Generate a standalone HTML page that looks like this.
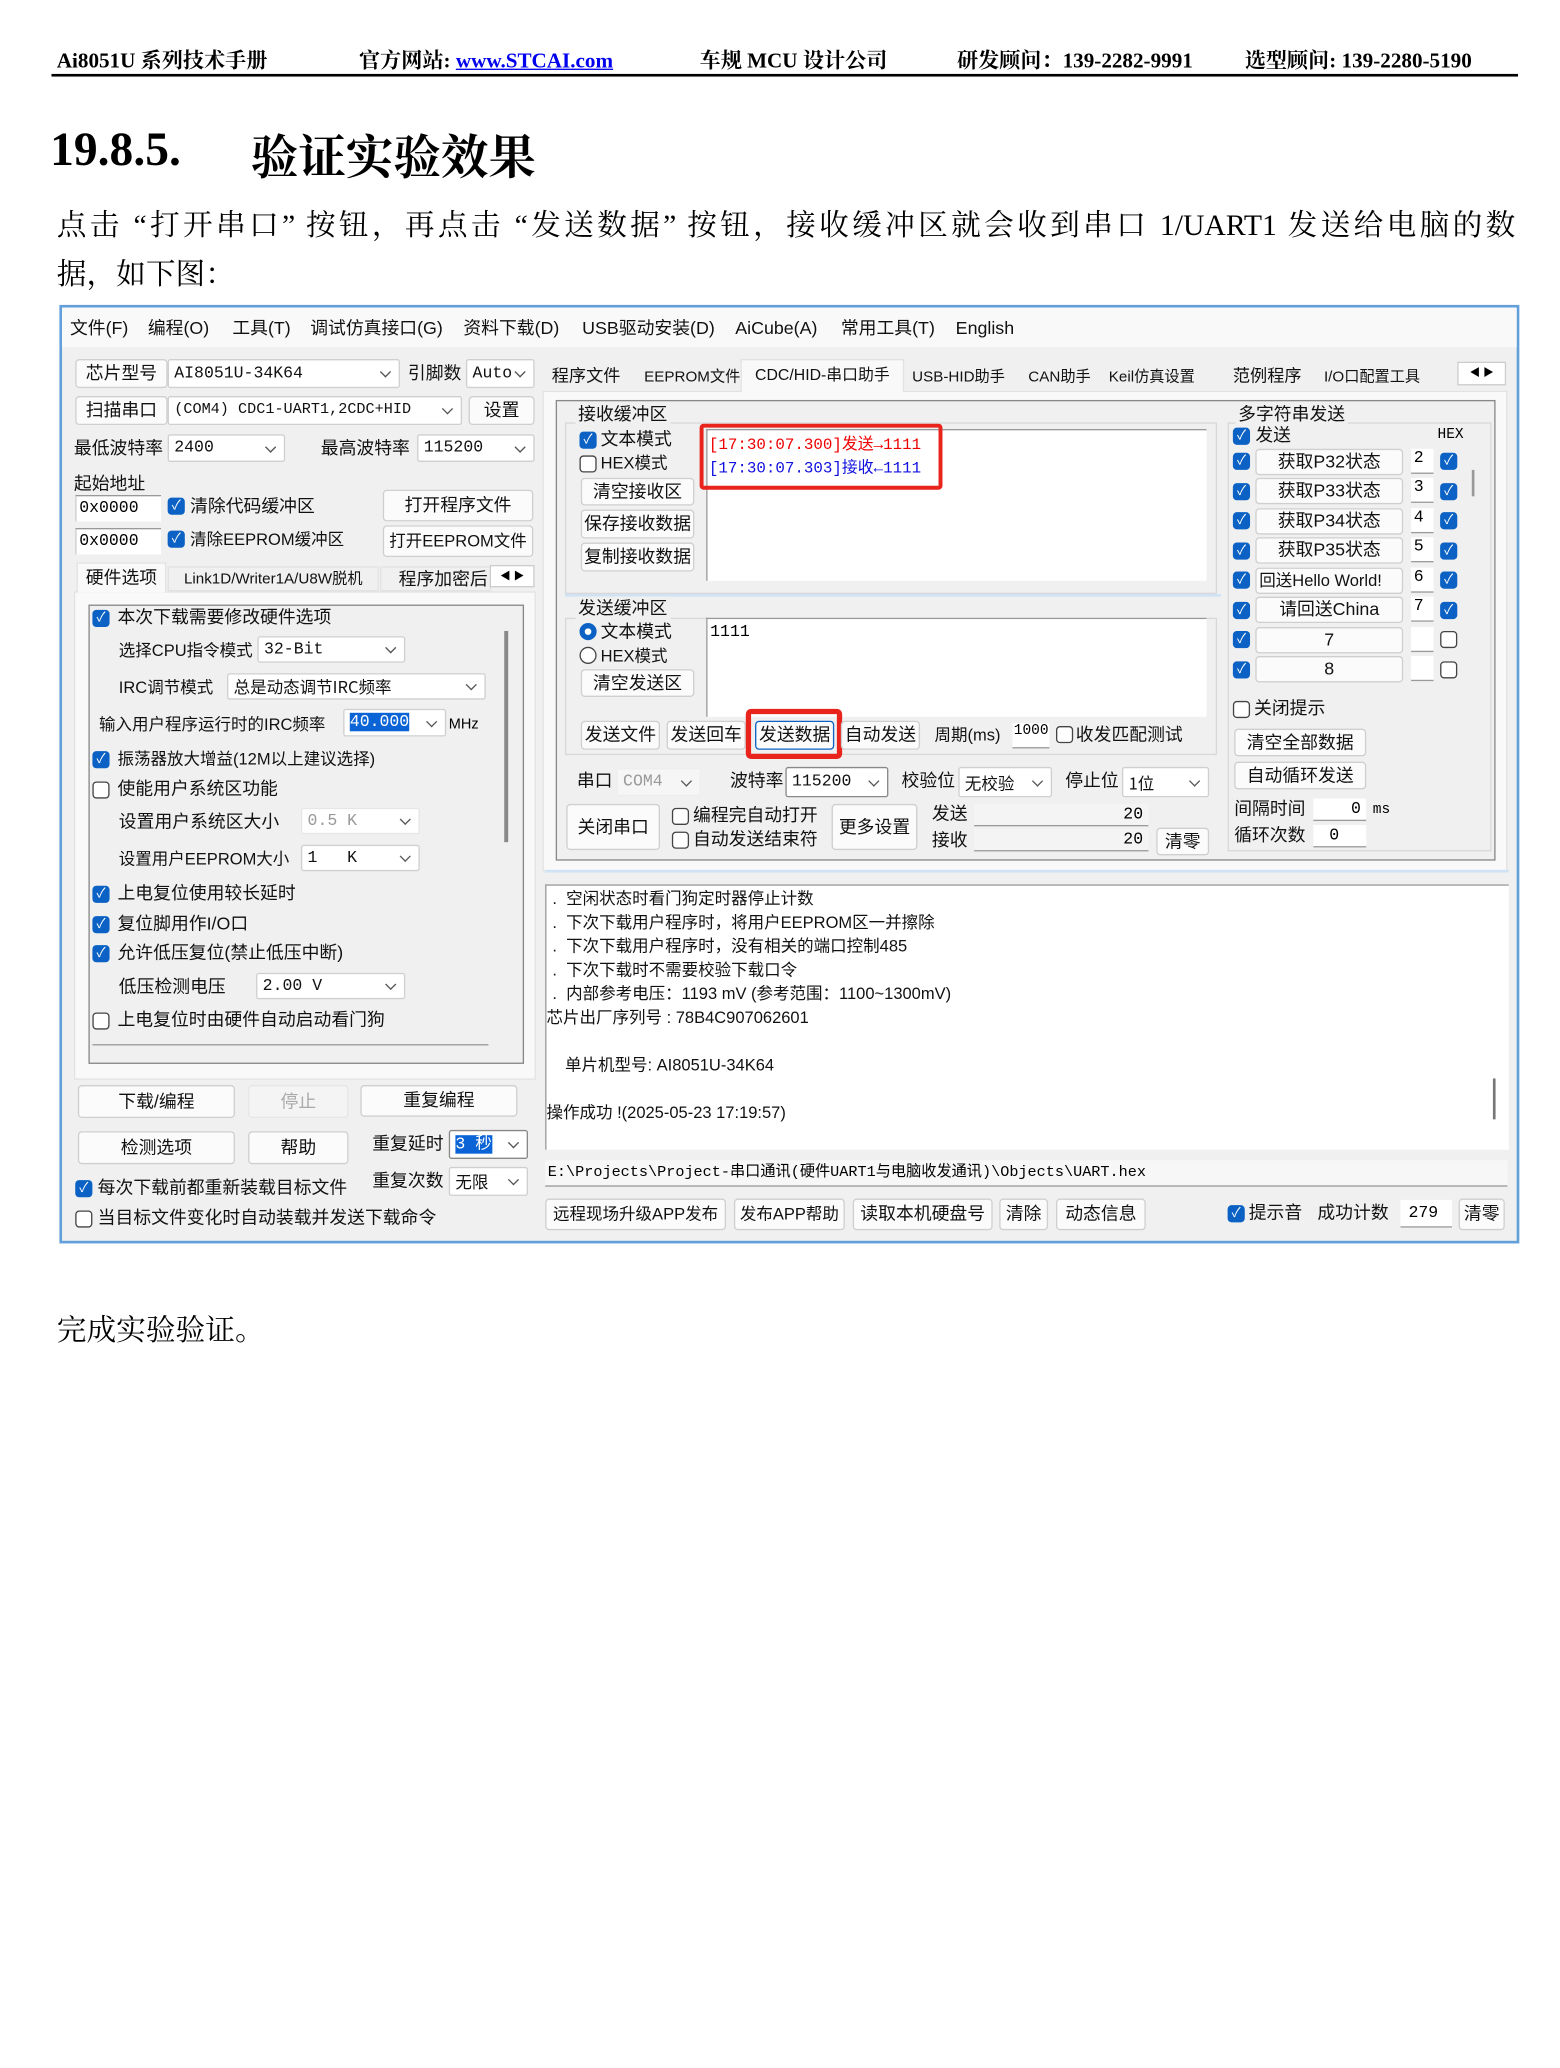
<!DOCTYPE html>
<html><head><meta charset="utf-8">
<style>
*{margin:0;padding:0;box-sizing:border-box}
body{width:1560px;height:2068px;background:#fff;overflow:hidden;position:relative}
#s{position:absolute;left:0;top:0;width:1182px;height:1567px;transform:scale(1.32);transform-origin:0 0;font-family:"Liberation Sans","Noto Sans CJK SC",sans-serif}
.a{position:absolute;white-space:nowrap}
.sf{font-family:"Liberation Serif","Noto Serif CJK SC",serif}
.ui{font-size:13.5px;color:#111;line-height:18px}
.btn{position:absolute;background:#fbfbfb;border:1px solid #cfcfcf;border-radius:3px;text-align:center;font-size:13.5px;color:#111;white-space:nowrap;overflow:hidden}
.cmb{position:absolute;background:#fff;border:1px solid #cfcfcf;border-radius:2px;font-size:12.5px;padding-left:4px;color:#111;white-space:nowrap;overflow:hidden;font-family:"Liberation Mono","Noto Sans CJK SC",monospace}
.cmb:after{content:"";position:absolute;right:7px;top:50%;width:5px;height:5px;border-right:1px solid #555;border-bottom:1px solid #555;transform:translateY(-70%) rotate(45deg)}
.inp{position:absolute;background:#fff;border-top:1px solid #999;border-left:1px solid #ccc;font-size:12.5px;padding-left:2px;font-family:"Liberation Mono",monospace}
.cb{position:absolute;width:13px;height:13px;border-radius:3px;background:#0b62c4;color:#fff;font-size:10px;line-height:13px;text-align:center}
.cb:before{content:"✓"}
.cu{position:absolute;width:13px;height:13px;border-radius:3px;border:1px solid #444;background:#fff}
.fld{position:absolute;background:#fff;border-bottom:1px solid #9a9a9a;font-size:12.5px;text-align:right;padding-right:4px;font-family:"Liberation Mono",monospace}
.grp{position:absolute;border:1px solid #d8d8d8}
</style></head><body><div id="s">

<!-- header -->
<div class="a sf" style="left:43px;top:33px;font-size:16px;font-weight:bold">Ai8051U 系列技术手册</div>
<div class="a sf" style="left:272px;top:33px;font-size:16px;font-weight:bold">官方网站: <span style="color:#0000ee;text-decoration:underline">www.STCAI.com</span></div>
<div class="a sf" style="left:530px;top:33px;font-size:16px;font-weight:bold">车规 MCU 设计公司</div>
<div class="a sf" style="left:725px;top:33px;font-size:16px;font-weight:bold">研发顾问：139-2282-9991</div>
<div class="a sf" style="left:943px;top:33px;font-size:16px;font-weight:bold">选型顾问: 139-2280-5190</div>
<div class="a" style="left:39px;top:56px;width:1111px;height:2px;background:#000"></div>

<div class="a sf" style="left:38px;top:92px;font-size:36px;font-weight:bold">19.8.5.</div>
<div class="a sf" style="left:190px;top:92px;font-size:36px;font-weight:bold">验证实验效果</div>
<div class="a sf" style="left:43px;top:153px;font-size:22.5px;width:1105px;text-align:justify;text-align-last:justify;white-space:normal;height:32px;overflow:hidden">点击 “打开串口” 按钮，再点击 “发送数据” 按钮，接收缓冲区就会收到串口 1/UART1 发送给电脑的数</div>
<div class="a sf" style="left:43px;top:190px;font-size:22.5px">据，如下图：</div>

<!-- window -->
<div class="a" style="left:45px;top:231px;width:1106px;height:711px;background:#f0f0f0;border:2px solid #62a0dc"></div>
<div class="a" style="left:47px;top:233px;width:1102px;height:30px;background:#f9f9f9"></div>
<div class="a ui" style="top:240px;left:53px">文件(F)</div>
<div class="a ui" style="top:240px;left:112px">编程(O)</div>
<div class="a ui" style="top:240px;left:176px">工具(T)</div>
<div class="a ui" style="top:240px;left:235px">调试仿真接口(G)</div>
<div class="a ui" style="top:240px;left:351px">资料下载(D)</div>
<div class="a ui" style="top:240px;left:441px">USB驱动安装(D)</div>
<div class="a ui" style="top:240px;left:557px">AiCube(A)</div>
<div class="a ui" style="top:240px;left:637px">常用工具(T)</div>
<div class="a ui" style="top:240px;left:724px">English</div>

<!-- left panel -->
<div class="btn" style="left:57px;top:272px;width:70px;height:22px;line-height:20px">芯片型号</div>
<div class="cmb" style="left:127px;top:272px;width:176px;height:22px;line-height:20px">AI8051U-34K64</div>
<div class="a ui" style="left:309px;top:274px">引脚数</div>
<div class="cmb" style="left:353px;top:272px;width:52px;height:22px;line-height:20px">Auto</div>
<div class="btn" style="left:57px;top:300px;width:70px;height:22px;line-height:20px">扫描串口</div>
<div class="cmb" style="left:127px;top:300px;width:223px;height:22px;line-height:20px;font-size:11.5px">(COM4) CDC1-UART1,2CDC+HID</div>
<div class="btn" style="left:355px;top:300px;width:50px;height:22px;line-height:20px">设置</div>
<div class="a ui" style="left:56px;top:331px">最低波特率</div>
<div class="cmb" style="left:127px;top:329px;width:89px;height:21px;line-height:19px">2400</div>
<div class="a ui" style="left:243px;top:331px">最高波特率</div>
<div class="cmb" style="left:316px;top:329px;width:89px;height:21px;line-height:19px">115200</div>
<div class="a ui" style="left:56px;top:358px">起始地址</div>
<div class="inp" style="left:57px;top:375px;width:65px;height:20px;line-height:18px">0x0000</div>
<div class="cb" style="left:127px;top:377px"></div><div class="a ui" style="left:144px;top:375px">清除代码缓冲区</div>
<div class="btn" style="left:290px;top:371px;width:114px;height:24px;line-height:22px">打开程序文件</div>
<div class="inp" style="left:57px;top:400px;width:65px;height:20px;line-height:18px">0x0000</div>
<div class="cb" style="left:127px;top:402px"></div><div class="a ui" style="left:144px;top:400px;font-size:12.5px">清除EEPROM缓冲区</div>
<div class="btn" style="left:290px;top:398px;width:114px;height:24px;line-height:22px;font-size:12.5px">打开EEPROM文件</div>
<!-- tabs -->
<div class="a" style="left:56px;top:448px;width:350px;height:370px;background:#f9f9f9;border:1px solid #e2e2e2"></div>
<div class="a ui" style="left:58px;top:426px;width:68px;height:23px;background:#f9f9f9;border:1px solid #e2e2e2;border-bottom:none;text-align:center;line-height:22px">硬件选项</div>
<div class="a ui" style="left:127px;top:429px;width:160px;height:19px;border:1px solid #e2e2e2;text-align:center;line-height:18px;font-size:11.5px">Link1D/Writer1A/U8W脱机</div>
<div class="a ui" style="left:288px;top:429px;width:84px;height:19px;border:1px solid #e2e2e2;overflow:hidden;padding-left:13px;line-height:18px">程序加密后</div>
<div class="a" style="left:371px;top:428px;width:34px;height:17px;background:#fff;border:1px solid #ccc;font-size:8px;line-height:15px;text-align:center">◀ ▶</div>
<div class="a" style="left:67px;top:458px;width:330px;height:348px;border:1px solid #888;background:#f0f0f0"></div>
<div class="a" style="left:382px;top:478px;width:3px;height:160px;background:#888"></div>
<div class="cb" style="left:70px;top:462px"></div><div class="a ui" style="left:89px;top:459px">本次下载需要修改硬件选项</div>
<div class="a ui" style="left:90px;top:484px;font-size:12.5px">选择CPU指令模式</div>
<div class="cmb" style="left:195px;top:482px;width:112px;height:20px;line-height:18px">32-Bit</div>
<div class="a ui" style="left:90px;top:512px;font-size:12.5px">IRC调节模式</div>
<div class="cmb" style="left:172px;top:510px;width:196px;height:20px;line-height:18px;font-family:'Noto Sans CJK SC',sans-serif">总是动态调节IRC频率</div>
<div class="a ui" style="left:75px;top:540px;font-size:12.5px">输入用户程序运行时的IRC频率</div>
<div class="cmb" style="left:260px;top:537px;width:78px;height:21px;line-height:19px"><span style="background:#0a64d6;color:#fff">40.000</span></div>
<div class="a" style="left:340px;top:543px;font-size:11px">MHz</div>
<div class="cb" style="left:70px;top:569px"></div><div class="a ui" style="left:89px;top:566px;font-size:12.5px">振荡器放大增益(12M以上建议选择)</div>
<div class="cu" style="left:70px;top:592px"></div><div class="a ui" style="left:89px;top:589px">使能用户系统区功能</div>
<div class="a ui" style="left:90px;top:614px">设置用户系统区大小</div>
<div class="cmb" style="left:228px;top:612px;width:90px;height:20px;line-height:18px;color:#999;border-color:#e6e6e6">0.5 K</div>
<div class="a ui" style="left:90px;top:642px;font-size:12.5px">设置用户EEPROM大小</div>
<div class="cmb" style="left:228px;top:640px;width:90px;height:20px;line-height:18px">1 &nbsp; K</div>
<div class="cb" style="left:70px;top:671px"></div><div class="a ui" style="left:89px;top:668px">上电复位使用较长延时</div>
<div class="cb" style="left:70px;top:694px"></div><div class="a ui" style="left:89px;top:691px">复位脚用作I/O口</div>
<div class="cb" style="left:70px;top:716px"></div><div class="a ui" style="left:89px;top:713px">允许低压复位(禁止低压中断)</div>
<div class="a ui" style="left:90px;top:739px">低压检测电压</div>
<div class="cmb" style="left:194px;top:737px;width:113px;height:20px;line-height:18px">2.00 V</div>
<div class="cu" style="left:70px;top:767px"></div><div class="a ui" style="left:89px;top:764px">上电复位时由硬件自动启动看门狗</div>
<div class="a" style="left:70px;top:791px;width:300px;height:1px;background:#999"></div>

<div class="btn" style="left:59px;top:822px;width:119px;height:25px;line-height:23px">下载/编程</div>
<div class="btn" style="left:188px;top:822px;width:76px;height:25px;line-height:23px;color:#aaa;background:#f4f4f4;border-color:#e6e6e6">停止</div>
<div class="btn" style="left:273px;top:822px;width:119px;height:24px;line-height:22px">重复编程</div>
<div class="btn" style="left:59px;top:857px;width:119px;height:25px;line-height:23px">检测选项</div>
<div class="btn" style="left:188px;top:857px;width:76px;height:25px;line-height:23px">帮助</div>
<div class="a ui" style="left:282px;top:858px">重复延时</div>
<div class="cmb" style="left:340px;top:856px;width:60px;height:22px;line-height:20px;border-color:#888"><span style="background:#0a64d6;color:#fff">3 秒</span></div>
<div class="a ui" style="left:282px;top:886px">重复次数</div>
<div class="cmb" style="left:340px;top:884px;width:60px;height:22px;line-height:20px;font-family:'Noto Sans CJK SC',sans-serif">无限</div>
<div class="cb" style="left:57px;top:894px"></div><div class="a ui" style="left:74px;top:891px">每次下载前都重新装载目标文件</div>
<div class="cu" style="left:57px;top:917px"></div><div class="a ui" style="left:74px;top:914px">当目标文件变化时自动装载并发送下载命令</div>

<!-- right tabs -->
<div class="a" style="left:411px;top:296px;width:731px;height:364px;background:#f9f9f9;border:1px solid #e2e2e2"></div>
<div class="a ui" style="left:418px;top:276px;font-size:13px">程序文件</div>
<div class="a ui" style="left:488px;top:277px;font-size:11.5px">EEPROM文件</div>
<div class="a ui" style="left:561px;top:272px;width:124px;height:25px;background:#f9f9f9;border:1px solid #e2e2e2;border-bottom:none;text-align:center;font-size:12px;line-height:22px">CDC/HID-串口助手</div>
<div class="a ui" style="left:691px;top:277px;font-size:11.5px">USB-HID助手</div>
<div class="a ui" style="left:779px;top:277px;font-size:11.5px">CAN助手</div>
<div class="a ui" style="left:840px;top:277px;font-size:11.5px">Keil仿真设置</div>
<div class="a ui" style="left:934px;top:276px;font-size:13px">范例程序</div>
<div class="a ui" style="left:1003px;top:277px;font-size:11.5px">I/O口配置工具</div>
<div class="a" style="left:1104px;top:274px;width:37px;height:18px;background:#fff;border:1px solid #ccc;font-size:8px;line-height:16px;text-align:center">◀ ▶</div>
<div class="a" style="left:421px;top:303px;width:712px;height:349px;border:1px solid #888;background:#f0f0f0"></div>

<div class="grp" style="left:428px;top:320px;width:494px;height:130px"></div>
<div class="a ui" style="left:436px;top:305px;background:#f0f0f0;padding:0 2px">接收缓冲区</div>
<div class="cb" style="left:439px;top:327px"></div><div class="a ui" style="left:455px;top:324px">文本模式</div>
<div class="cu" style="left:439px;top:345px"></div><div class="a ui" style="left:455px;top:342px;font-size:12.5px">HEX模式</div>
<div class="btn" style="left:440px;top:362px;width:86px;height:21px;line-height:19px">清空接收区</div>
<div class="btn" style="left:440px;top:386px;width:86px;height:22px;line-height:20px">保存接收数据</div>
<div class="btn" style="left:440px;top:411px;width:86px;height:22px;line-height:20px">复制接收数据</div>
<div class="a" style="left:535px;top:325px;width:379px;height:115px;background:#fff;border-left:1px solid #999;border-top:1px solid #999"></div>
<div class="a" style="left:537px;top:327px;font-size:12px;color:#e00;font-family:'Liberation Mono','Noto Sans CJK SC',monospace">[17:30:07.300]发送→1111</div>
<div class="a" style="left:537px;top:345px;font-size:12px;color:#1010e0;font-family:'Liberation Mono','Noto Sans CJK SC',monospace">[17:30:07.303]接收←1111</div>
<div class="a" style="left:530px;top:321px;width:184px;height:50px;border:3px solid #e8241c;border-radius:3px"></div>
<div class="a" style="left:428px;top:450px;width:497px;height:2px;background:#cfe3f5"></div>

<div class="grp" style="left:428px;top:468px;width:494px;height:104px"></div>
<div class="a ui" style="left:436px;top:452px;background:#f0f0f0;padding:0 2px">发送缓冲区</div>
<div class="a" style="left:439px;top:472px;width:13px;height:13px;border-radius:50%;border:4px solid #0b62c4;background:#fff"></div><div class="a ui" style="left:455px;top:470px">文本模式</div>
<div class="a" style="left:439px;top:490px;width:13px;height:13px;border-radius:50%;border:1px solid #444;background:#fff"></div><div class="a ui" style="left:455px;top:488px;font-size:12.5px">HEX模式</div>
<div class="btn" style="left:440px;top:507px;width:86px;height:21px;line-height:19px">清空发送区</div>
<div class="a" style="left:535px;top:468px;width:379px;height:75px;background:#fff;border-left:1px solid #999;border-top:1px solid #999;font-size:12.5px;padding:3px 2px;font-family:'Liberation Mono',monospace">1111</div>
<div class="btn" style="left:440px;top:546px;width:60px;height:22px;line-height:20px">发送文件</div>
<div class="btn" style="left:505px;top:546px;width:60px;height:22px;line-height:20px">发送回车</div>
<div class="btn" style="left:572px;top:546px;width:60px;height:22px;line-height:20px;border-color:#0b62c4">发送数据</div>
<div class="a" style="left:565px;top:537px;width:73px;height:38px;border:4px solid #e8241c;border-radius:4px"></div>
<div class="btn" style="left:637px;top:546px;width:60px;height:22px;line-height:20px">自动发送</div>
<div class="a ui" style="left:708px;top:548px;font-size:12.5px">周期(ms)</div>
<div class="fld" style="left:767px;top:548px;width:28px;height:19px;text-align:left;padding:0 1px;font-size:11px;overflow:hidden">1000</div>
<div class="cu" style="left:800px;top:550px"></div><div class="a ui" style="left:815px;top:548px">收发匹配测试</div>

<div class="a ui" style="left:437px;top:583px">串口</div>
<div class="cmb" style="left:467px;top:582px;width:64px;height:21px;line-height:19px;color:#999;border-color:#eee;background:#f6f6f6">COM4</div>
<div class="a ui" style="left:553px;top:583px">波特率</div>
<div class="cmb" style="left:595px;top:581px;width:78px;height:23px;line-height:21px;border-color:#888">115200</div>
<div class="a ui" style="left:683px;top:583px">校验位</div>
<div class="cmb" style="left:726px;top:581px;width:71px;height:23px;line-height:21px;font-family:'Noto Sans CJK SC',sans-serif">无校验</div>
<div class="a ui" style="left:807px;top:583px">停止位</div>
<div class="cmb" style="left:850px;top:581px;width:66px;height:23px;line-height:21px;font-family:'Noto Sans CJK SC',sans-serif">1位</div>
<div class="btn" style="left:429px;top:609px;width:71px;height:35px;line-height:33px">关闭串口</div>
<div class="cu" style="left:509px;top:612px"></div><div class="a ui" style="left:525px;top:609px">编程完自动打开</div>
<div class="cu" style="left:509px;top:630px"></div><div class="a ui" style="left:525px;top:627px">自动发送结束符</div>
<div class="btn" style="left:630px;top:609px;width:65px;height:35px;line-height:33px">更多设置</div>
<div class="a ui" style="left:706px;top:608px">发送</div>
<div class="fld" style="left:738px;top:609px;width:132px;height:17px;line-height:16px;background:#f4f4f4">20</div>
<div class="a ui" style="left:706px;top:628px">接收</div>
<div class="fld" style="left:738px;top:628px;width:132px;height:17px;line-height:16px;background:#f4f4f4">20</div>
<div class="btn" style="left:876px;top:627px;width:40px;height:21px;line-height:19px">清零</div>

<!-- multi string -->
<div class="grp" style="left:930px;top:320px;width:200px;height:325px"></div>
<div class="a ui" style="left:936px;top:305px;background:#f0f0f0;padding:0 2px">多字符串发送</div>
<div class="cb" style="left:934px;top:324px"></div><div class="a ui" style="left:951px;top:321px">发送</div>
<div class="a" style="left:1089px;top:324px;font-size:11px;font-family:'Liberation Mono',monospace">HEX</div>
<div class="cb" style="left:934px;top:343px"></div><div class="btn" style="left:951px;top:340px;width:112px;height:20px;line-height:18px">获取P32状态</div><div class="fld" style="left:1069px;top:340px;width:17px;height:19px;text-align:left;padding:0 2px">2</div><div class="cb" style="left:1091px;top:343px"></div>
<div class="cb" style="left:934px;top:366px"></div><div class="btn" style="left:951px;top:362px;width:112px;height:20px;line-height:18px">获取P33状态</div><div class="fld" style="left:1069px;top:362px;width:17px;height:19px;text-align:left;padding:0 2px">3</div><div class="cb" style="left:1091px;top:366px"></div>
<div class="cb" style="left:934px;top:388px"></div><div class="btn" style="left:951px;top:385px;width:112px;height:20px;line-height:18px">获取P34状态</div><div class="fld" style="left:1069px;top:385px;width:17px;height:19px;text-align:left;padding:0 2px">4</div><div class="cb" style="left:1091px;top:388px"></div>
<div class="cb" style="left:934px;top:411px"></div><div class="btn" style="left:951px;top:407px;width:112px;height:20px;line-height:18px">获取P35状态</div><div class="fld" style="left:1069px;top:407px;width:17px;height:19px;text-align:left;padding:0 2px">5</div><div class="cb" style="left:1091px;top:411px"></div>
<div class="cb" style="left:934px;top:433px"></div><div class="btn" style="left:951px;top:430px;width:112px;height:20px;line-height:18px;text-align:left;padding-left:2px;font-size:12.5px">回送Hello World!</div><div class="fld" style="left:1069px;top:430px;width:17px;height:19px;text-align:left;padding:0 2px">6</div><div class="cb" style="left:1091px;top:433px"></div>
<div class="cb" style="left:934px;top:456px"></div><div class="btn" style="left:951px;top:452px;width:112px;height:20px;line-height:18px">请回送China</div><div class="fld" style="left:1069px;top:452px;width:17px;height:19px;text-align:left;padding:0 2px">7</div><div class="cb" style="left:1091px;top:456px"></div>
<div class="cb" style="left:934px;top:478px"></div><div class="btn" style="left:951px;top:475px;width:112px;height:20px;line-height:18px">7</div><div class="fld" style="left:1069px;top:475px;width:17px;height:19px"></div><div class="cu" style="left:1091px;top:478px"></div>
<div class="cb" style="left:934px;top:501px"></div><div class="btn" style="left:951px;top:497px;width:112px;height:20px;line-height:18px">8</div><div class="fld" style="left:1069px;top:497px;width:17px;height:19px"></div><div class="cu" style="left:1091px;top:501px"></div>
<div class="a" style="left:1115px;top:356px;width:2px;height:20px;background:#999"></div>
<div class="cu" style="left:934px;top:531px"></div><div class="a ui" style="left:950px;top:528px">关闭提示</div>
<div class="btn" style="left:935px;top:552px;width:100px;height:21px;line-height:19px">清空全部数据</div>
<div class="btn" style="left:935px;top:577px;width:100px;height:21px;line-height:19px">自动循环发送</div>
<div class="a ui" style="left:935px;top:604px">间隔时间</div>
<div class="fld" style="left:995px;top:605px;width:40px;height:17px;line-height:16px">0</div>
<div class="a" style="left:1040px;top:608px;font-size:11px;font-family:'Liberation Mono',monospace">ms</div>
<div class="a ui" style="left:935px;top:624px">循环次数</div>
<div class="fld" style="left:995px;top:625px;width:40px;height:17px;line-height:16px;text-align:left;padding-left:12px">0</div>

<!-- log -->
<div class="a" style="left:413px;top:659px;width:730px;height:2px;background:#cfe3f5"></div>
<div class="a" style="left:413px;top:670px;width:730px;height:201px;background:#fff;border-top:1px solid #999;border-left:1px solid #999"></div>
<div class="a" style="left:1131px;top:817px;width:2px;height:31px;background:#777"></div>
<div class="a ui" style="left:415px;top:672px;font-size:12.5px;line-height:18px">
&nbsp;. &nbsp;空闲状态时看门狗定时器停止计数<br>
&nbsp;. &nbsp;下次下载用户程序时，将用户EEPROM区一并擦除<br>
&nbsp;. &nbsp;下次下载用户程序时，没有相关的端口控制485<br>
&nbsp;. &nbsp;下次下载时不需要校验下载口令<br>
&nbsp;. &nbsp;内部参考电压：1193 mV (参考范围：1100~1300mV)</div>
<div class="a ui" style="left:414px;top:762px;font-size:12.5px">芯片出厂序列号 : 78B4C907062601</div>
<div class="a ui" style="left:428px;top:798px;font-size:12.5px">单片机型号: AI8051U-34K64</div>
<div class="a ui" style="left:414px;top:834px;font-size:12.5px">操作成功 !(2025-05-23 17:19:57)</div>
<div class="a" style="left:413px;top:879px;width:729px;height:20px;background:#f7f7f7;border-bottom:1px solid #999;font-size:11.5px;line-height:19px;padding-left:2px;font-family:'Liberation Mono','Noto Sans CJK SC',monospace">E:\Projects\Project-串口通讯(硬件UART1与电脑收发通讯)\Objects\UART.hex</div>
<div class="btn" style="left:413px;top:908px;width:137px;height:24px;line-height:22px;font-size:12.5px">远程现场升级APP发布</div>
<div class="btn" style="left:556px;top:908px;width:84px;height:24px;line-height:22px;font-size:12.5px">发布APP帮助</div>
<div class="btn" style="left:646px;top:908px;width:106px;height:24px;line-height:22px">读取本机硬盘号</div>
<div class="btn" style="left:757px;top:908px;width:37px;height:24px;line-height:22px">清除</div>
<div class="btn" style="left:800px;top:908px;width:68px;height:24px;line-height:22px">动态信息</div>
<div class="cb" style="left:930px;top:913px"></div><div class="a ui" style="left:946px;top:910px">提示音</div>
<div class="a ui" style="left:998px;top:910px">成功计数</div>
<div class="fld" style="left:1061px;top:909px;width:39px;height:21px;line-height:20px;text-align:left;padding-left:6px">279</div>
<div class="btn" style="left:1105px;top:908px;width:35px;height:24px;line-height:22px">清零</div>

<div class="a sf" style="left:43px;top:990px;font-size:22.5px">完成实验验证。</div>
</div></body></html>
